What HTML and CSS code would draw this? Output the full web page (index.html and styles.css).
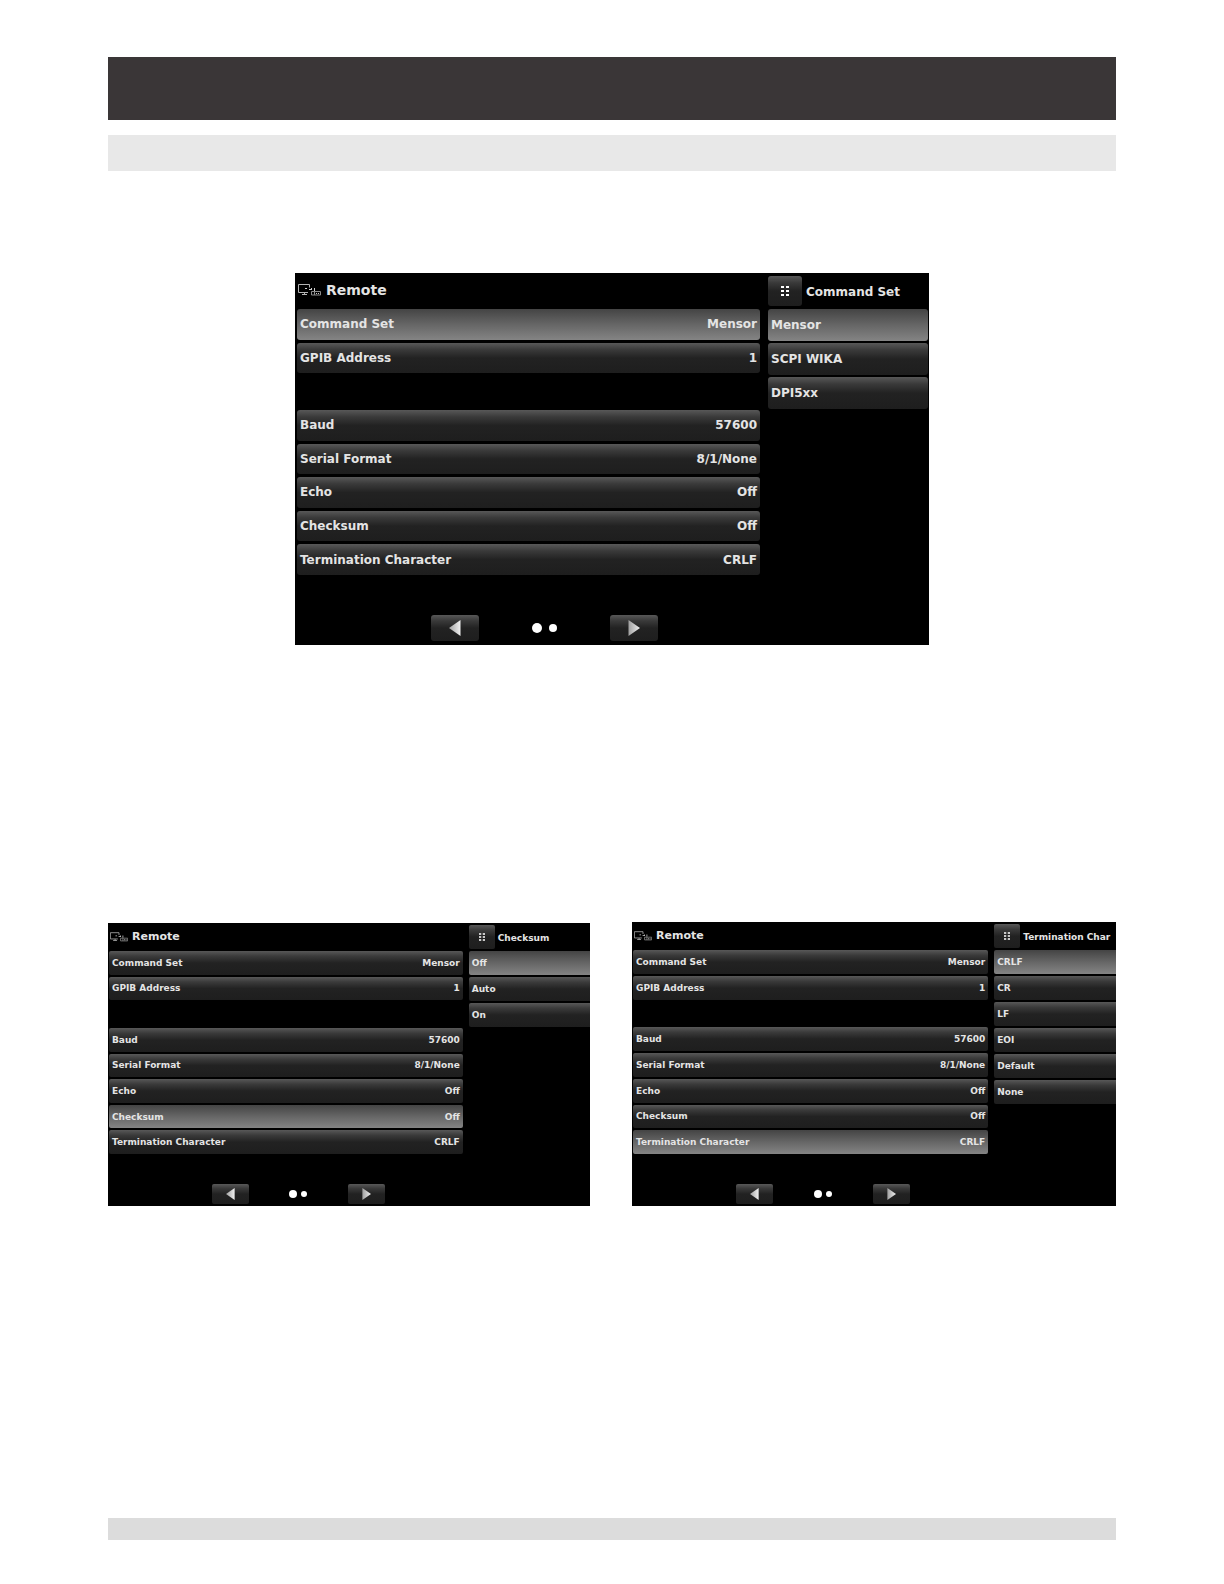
FILE: index.html
```
<!DOCTYPE html>
<html lang="en">
<head>
    <meta charset="UTF-8">
    <meta name="viewport" content="width=device-width, initial-scale=1">
    <title>Remote</title>
    <link rel="stylesheet" href="styles.css">
</head>
<body>
    <!-- shared icons -->
    <svg class="sprite" aria-hidden="true">
        <defs>
            <linearGradient id="arrowFill" x1="0" x2="1" y1="0" y2="0">
                <stop offset="0" stop-color="#a0a0a0"/>
                <stop offset="1" stop-color="#f0f0f0"/>
            </linearGradient>
        </defs>
        <symbol id="icon-remote" viewBox="0 0 23 12">
            <path d="M10 8.500H.5v-8h11v3M4 10.500h5M6.500 8.500v2" fill="none" stroke="#b4b4b4"/>
            <path d="M7 4h2v1H7zM11 5h2v1h-2zM13 4h1v2h-1zM16 4h1v3h-1z" fill="#d0d0d0"/>
            <path d="M13.500 11V7.500h9V11zM16.500 7.500V11" fill="none" stroke="#8c8c8c"/>
            <path d="M18 9h1v1h-1zM20 9h1v1h-1z" fill="#c4c4c4"/>
        </symbol>
        <symbol id="icon-keypad" viewBox="0 0 8 10">
            <path d="M0 0h3v2H0zM5 0h3v2H5zM0 4h3v2H0zM5 4h3v2H5zM0 8h3v2H0zM5 8h3v2H5z" fill="#fff"/>
        </symbol>
        <symbol id="icon-prev" viewBox="0 0 12 16">
            <path d="M11.500 0v16L0 8z" fill="url(#arrowFill)"/>
        </symbol>
        <symbol id="icon-next" viewBox="0 0 12 16">
            <path d="M.5 0v16L12 8z" fill="url(#arrowFill)"/>
        </symbol>
    </svg>

    <header class="page-header"></header>
    <div class="section-bar"></div>

    <main>
        <section class="screen screen-large">
            <div class="settings">
                <h2 class="title"><svg class="remote-icon"><use href="#icon-remote"/></svg>Remote</h2>
                <div class="rows">
                    <button class="item selected"><span>Command Set</span><span>Mensor</span></button>
                    <button class="item"><span>GPIB Address</span><span>1</span></button>
                    <div class="blank"></div>
                    <button class="item"><span>Baud</span><span>57600</span></button>
                    <button class="item"><span>Serial Format</span><span>8/1/None</span></button>
                    <button class="item"><span>Echo</span><span>Off</span></button>
                    <button class="item"><span>Checksum</span><span>Off</span></button>
                    <button class="item"><span>Termination Character</span><span>CRLF</span></button>
                </div>
                <nav class="pager">
                    <button class="page-button" aria-label="Previous page"><svg><use href="#icon-prev"/></svg></button>
                    <span class="dots"><i class="dot current"></i><i class="dot"></i></span>
                    <button class="page-button" aria-label="Next page"><svg><use href="#icon-next"/></svg></button>
                </nav>
            </div>
            <div class="options">
                <div class="options-head">
                    <button class="keypad" aria-label="Menu"><svg><use href="#icon-keypad"/></svg></button>
                    <h3>Command Set</h3>
                </div>
                <button class="item selected">Mensor</button>
                <button class="item">SCPI WIKA</button>
                <button class="item">DPI5xx</button>
            </div>
        </section>

        <div class="screen-pair">
            <section class="screen screen-checksum">
                <div class="settings">
                    <h2 class="title"><svg class="remote-icon"><use href="#icon-remote"/></svg>Remote</h2>
                    <div class="rows">
                        <button class="item"><span>Command Set</span><span>Mensor</span></button>
                        <button class="item"><span>GPIB Address</span><span>1</span></button>
                        <div class="blank"></div>
                        <button class="item"><span>Baud</span><span>57600</span></button>
                        <button class="item"><span>Serial Format</span><span>8/1/None</span></button>
                        <button class="item"><span>Echo</span><span>Off</span></button>
                        <button class="item selected"><span>Checksum</span><span>Off</span></button>
                        <button class="item"><span>Termination Character</span><span>CRLF</span></button>
                    </div>
                    <nav class="pager">
                        <button class="page-button" aria-label="Previous page"><svg><use href="#icon-prev"/></svg></button>
                        <span class="dots"><i class="dot current"></i><i class="dot"></i></span>
                        <button class="page-button" aria-label="Next page"><svg><use href="#icon-next"/></svg></button>
                    </nav>
                </div>
                <div class="options">
                    <div class="options-head">
                        <button class="keypad" aria-label="Menu"><svg><use href="#icon-keypad"/></svg></button>
                        <h3>Checksum</h3>
                    </div>
                    <button class="item selected">Off</button>
                    <button class="item">Auto</button>
                    <button class="item">On</button>
                </div>
            </section>

            <section class="screen screen-termination">
                <div class="settings">
                    <h2 class="title"><svg class="remote-icon"><use href="#icon-remote"/></svg>Remote</h2>
                    <div class="rows">
                        <button class="item"><span>Command Set</span><span>Mensor</span></button>
                        <button class="item"><span>GPIB Address</span><span>1</span></button>
                        <div class="blank"></div>
                        <button class="item"><span>Baud</span><span>57600</span></button>
                        <button class="item"><span>Serial Format</span><span>8/1/None</span></button>
                        <button class="item"><span>Echo</span><span>Off</span></button>
                        <button class="item"><span>Checksum</span><span>Off</span></button>
                        <button class="item selected"><span>Termination Character</span><span>CRLF</span></button>
                    </div>
                    <nav class="pager">
                        <button class="page-button" aria-label="Previous page"><svg><use href="#icon-prev"/></svg></button>
                        <span class="dots"><i class="dot current"></i><i class="dot"></i></span>
                        <button class="page-button" aria-label="Next page"><svg><use href="#icon-next"/></svg></button>
                    </nav>
                </div>
                <div class="options">
                    <div class="options-head">
                        <button class="keypad" aria-label="Menu"><svg><use href="#icon-keypad"/></svg></button>
                        <h3>Termination Char</h3>
                    </div>
                    <button class="item selected">CRLF</button>
                    <button class="item">CR</button>
                    <button class="item">LF</button>
                    <button class="item">EOI</button>
                    <button class="item">Default</button>
                    <button class="item">None</button>
                </div>
            </section>
        </div>
    </main>

    <footer class="page-footer"></footer>
</body>
</html>
```
FILE: styles.css
```
:root {
    --text: #e4e4e4;
    --button: linear-gradient(#585858, #3a3a3a 22%, #222 50%, #1e1e1e);
    --button-selected: linear-gradient(#444, #666 50%, #848484);
}

* {
    box-sizing: border-box;
}

body {
    display: flex;
    flex-direction: column;
    min-height: 100vh;
    margin: 0;
    padding: 57px 108px 44px;
    background: #fff;
    font-family: "DejaVu Sans", sans-serif;
}

.sprite {
    position: absolute;
    width: 0;
    height: 0;
}

.page-header {
    height: 63px;
    background: #3a3637;
}

.section-bar {
    height: 36px;
    margin-top: 15px;
    background: #e8e8e8;
}

.page-footer {
    height: 22px;
    margin-top: auto;
    background: #dcdcdc;
}

/* instrument screens, small size by default */
.screen {
    --font: 9px;
    --title: 11px;
    --head: 28px;
    --rows: 203px;
    --gap: 2px;
    --option: 24px;
    --pad: 3px;
    --radius: 2px;
    display: grid;
    grid-template-columns: minmax(0, 353fr) minmax(0, 121fr);
    column-gap: 6px;
    padding: 0 0 2px 1px;
    background: #000;
    color: var(--text);
    font-size: var(--font);
    font-weight: bold;
}

.screen-large {
    --font: 12px;
    --title: 14px;
    --head: 36px;
    --rows: 266px;
    --gap: 3px;
    --option: 32px;
    --radius: 3px;
    grid-template-columns: minmax(0, 463fr) minmax(0, 161fr);
    column-gap: 8px;
    max-width: 634px;
    margin: 102px auto 0;
    padding: 0 0 4px 2px;
}

.screen-pair {
    display: grid;
    grid-template-columns: 482fr 484fr;
    align-items: end;
    gap: 42px;
    margin-top: 277px;
}

.screen-termination {
    --rows: 204px;
}

.title {
    display: flex;
    align-items: center;
    gap: 4px;
    height: var(--head);
    margin: 0;
    padding: 0 0 1px 1px;
    font-size: var(--title);
}

.remote-icon {
    width: 18px;
    height: 10px;
}

.screen-large .title {
    gap: 5px;
    padding-bottom: 2px;
}

.screen-large .remote-icon {
    width: 23px;
    height: 12px;
}

.rows {
    display: grid;
    grid-template-rows: repeat(8, 1fr);
    gap: var(--gap);
    min-height: var(--rows);
}

.item {
    display: flex;
    align-items: center;
    justify-content: space-between;
    width: 100%;
    margin: 0;
    padding: 0 var(--pad);
    border: 0;
    border-radius: var(--radius);
    background: var(--button);
    color: inherit;
    font: inherit;
    cursor: pointer;
}

.selected {
    background: var(--button-selected);
}

.options {
    display: flex;
    flex-direction: column;
    gap: 2px;
}

.options .item {
    height: var(--option);
}

.screen-pair .options .item {
    border-top-right-radius: 0;
    border-bottom-right-radius: 0;
}

.options-head {
    display: flex;
    align-items: center;
    gap: 3px;
    height: calc(var(--head) - 2px);
    padding-top: 1px;
}

.options-head h3 {
    margin: 0;
    padding-top: 3px;
    font-size: inherit;
    white-space: nowrap;
}

.keypad,
.page-button {
    display: flex;
    align-items: center;
    justify-content: center;
    padding: 0;
    border: 0;
    border-radius: var(--radius);
    background: var(--button);
    cursor: pointer;
}

.keypad {
    width: 26px;
    height: 24px;
}

.keypad svg {
    width: 6px;
    height: 8px;
}

.pager {
    display: flex;
    align-items: center;
    justify-content: space-between;
    width: 49%;
    margin: 30px 0 0 29%;
}

.page-button {
    width: 37px;
    height: 20px;
}

.page-button svg {
    width: 9px;
    height: 12px;
}

.dots {
    display: flex;
    align-items: center;
    gap: 4px;
}

.dot {
    width: 6px;
    height: 6px;
    border-radius: 50%;
    background: #fff;
}

.current {
    width: 8px;
    height: 8px;
}

.screen-large .options {
    padding-right: 1px;
}

.screen-large .options-head {
    gap: 4px;
}

.screen-large .keypad {
    width: 34px;
    height: 30px;
}

.screen-large .keypad svg {
    width: 8px;
    height: 10px;
}

.screen-large .pager {
    margin-top: 40px;
}

.screen-large .page-button {
    width: 48px;
    height: 26px;
}

.screen-large .page-button svg {
    width: 12px;
    height: 16px;
}

.screen-large .dots {
    gap: 7px;
}

.screen-large .dot {
    width: 8px;
    height: 8px;
}

.screen-large .current {
    width: 10px;
    height: 10px;
}
```
